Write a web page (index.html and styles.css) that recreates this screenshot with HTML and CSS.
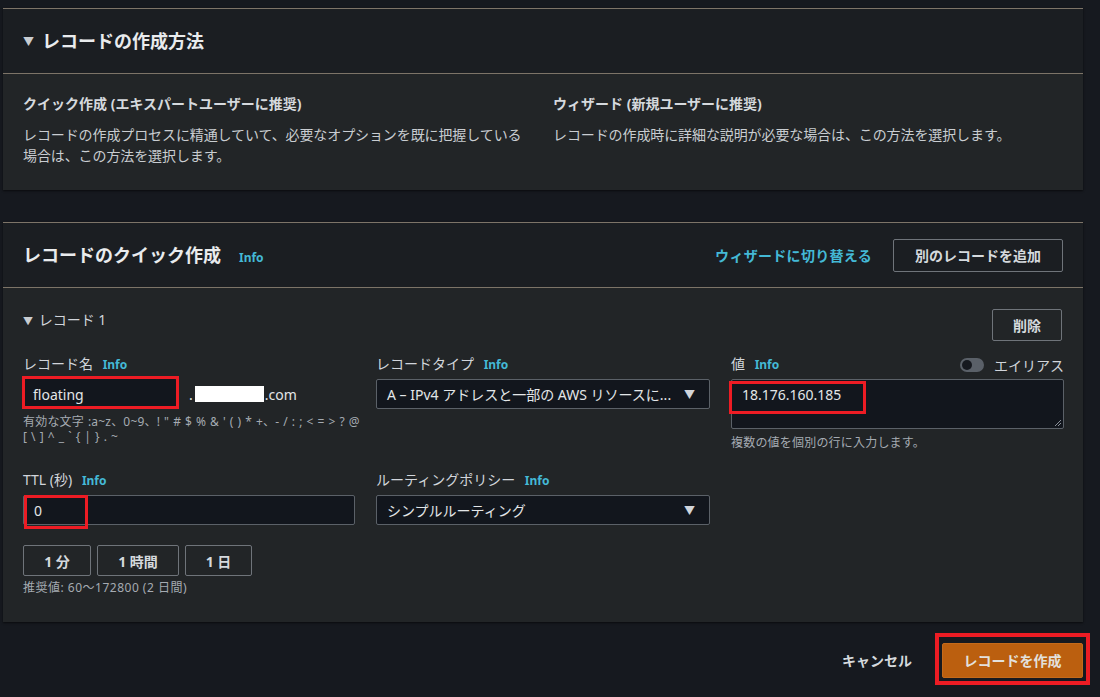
FILE: index.html
```html
<!DOCTYPE html>
<html lang="ja">
<head>
  <meta charset="UTF-8" />
  <title>レコードを作成</title>
  <link rel="stylesheet" href="styles.css">
</head>
<body>
  <div class="page">
    <section class="card">
      <div class="card-head">
        <span class="tri">&#9660;</span>
        <h2>レコードの作成方法</h2>
      </div>
      <div class="card-body methods">
        <div>
          <h3>クイック作成 (エキスパートユーザーに推奨)</h3>
          <p>レコードの作成プロセスに精通していて、必要なオプションを既に把握している場合は、この方法を選択します。</p>
        </div>
        <div>
          <h3>ウィザード (新規ユーザーに推奨)</h3>
          <p>レコードの作成時に詳細な説明が必要な場合は、この方法を選択します。</p>
        </div>
      </div>
    </section>

    <section class="card card-quick">
      <div class="card-head">
        <h2>レコードのクイック作成</h2>
        <a class="info info-head">Info</a>
        <div class="head-actions">
          <a class="link">ウィザードに切り替える</a>
          <button class="btn">別のレコードを追加</button>
        </div>
      </div>
      <div class="card-body">
        <div class="record-row">
          <span class="record-title"><span class="tri small">&#9660;</span> レコード 1</span>
          <button class="btn btn-del">削除</button>
        </div>

        <div class="grid">
          <div class="field">
            <label>レコード名 <a class="info">Info</a></label>
            <div class="name-row">
              <div class="input name-input">floating<span class="mark mark-name"></span></div>
              <span class="suffix">.<span class="blank"></span>.com</span>
            </div>
            <p class="hint hint-chars">有効な文字 :a~z、0~9、! " # $ % &amp; ' ( ) * +、- / : ; &lt; = &gt; ? @<br>[ \ ] ^ _ ` { | } . ~</p>
          </div>
          <div class="field">
            <label>レコードタイプ <a class="info">Info</a></label>
            <div class="input select">A – IPv4 アドレスと一部の AWS リソースに...<span class="caret">&#9660;</span></div>
          </div>
          <div class="field">
            <div class="label-row">
              <label>値 <a class="info">Info</a></label>
              <span class="alias"><span class="toggle"><span class="knob"></span></span>エイリアス</span>
            </div>
            <div class="input textarea">18.176.160.185
              <svg class="grip" width="9" height="9" viewBox="0 0 9 9"><path d="M8 2L2 8M8 5L5 8" stroke="#8a9099" stroke-width="1"/></svg>
              <span class="mark mark-value"></span>
            </div>
            <p class="hint">複数の値を個別の行に入力します。</p>
          </div>

          <div class="field row2">
            <label>TTL (秒) <a class="info">Info</a></label>
            <div class="input ttl">0<span class="mark mark-ttl"></span></div>
            <div class="ttl-btns">
              <button class="btn btn-sm w1">1 分</button>
              <button class="btn btn-sm w2">1 時間</button>
              <button class="btn btn-sm w3">1 日</button>
            </div>
            <p class="hint hint-ttl">推奨値: 60〜172800 (2 日間)</p>
          </div>
          <div class="field row2">
            <label>ルーティングポリシー <a class="info">Info</a></label>
            <div class="input select">シンプルルーティング<span class="caret">&#9660;</span></div>
          </div>
          <div></div>
        </div>
      </div>
    </section>

    <div class="footer">
      <a class="cancel">キャンセル</a>
      <div class="submit-wrap">
        <button class="btn-primary">レコードを作成</button>
        <span class="mark mark-submit"></span>
      </div>
    </div>
  </div>
</body>
</html>
```

FILE: styles.css
```css
html, body {
  margin: 0;
  background: #16191f;
}
body {
  font-family: "Noto Sans", "Noto Sans CJK JP", sans-serif;
  color: #d1d5db;
  font-size: 14px;
}
.page {
  width: 1080px;
  padding: 8px 0 0 3px;
}
.card {
  border-top: 1px solid #7d7468;
  background: #222527;
  box-shadow: 0 1px 2px rgba(0, 0, 0, 0.6);
}
.card + .card {
  margin-top: 32px;
}
.card-head {
  height: 64px;
  background: #1b1e22;
  border-bottom: 1px solid #7d7468;
  display: flex;
  align-items: center;
  padding: 0 20px;
}
.card-head h2 {
  margin: 0;
  font-size: 18px;
  font-weight: 700;
  color: #e9ebed;
  line-height: 24px;
}
.tri {
  color: #c9cdd1;
  font-size: 11px;
  margin-right: 8px;
}
.tri.small {
  font-size: 10px;
  margin-right: 2px;
}
.card-body {
  padding: 20px 20px;
}
.methods {
  display: grid;
  grid-template-columns: 1fr 1fr;
  column-gap: 20px;
  height: 76px;
  padding-top: 20px;
}
.methods h3 {
  margin: 0 0 10px;
  font-size: 14px;
  font-weight: 700;
  line-height: 20px;
  color: #d5d9dd;
}
.methods p {
  margin: 0;
  line-height: 21px;
  color: #c9cdd1;
  letter-spacing: -0.1px;
}
.info {
  color: #44b9d6;
  font-size: 12px;
  font-weight: 700;
  margin-left: 6px;
}
.info-head {
  margin-left: 18px;
  margin-top: 4px;
}
.head-actions {
  margin-left: auto;
  display: flex;
  align-items: center;
  gap: 21px;
}
.link {
  color: #44b9d6;
  font-weight: 700;
  font-size: 14px;
  letter-spacing: 0.3px;
}
.btn {
  background: #1b1e22;
  border: 1px solid #6f747a;
  border-radius: 2px;
  color: #d5d9dd;
  font-family: inherit;
  font-weight: 700;
  font-size: 14px;
  height: 33px;
  padding: 0 21px;
}
.card-quick .card-body {
  height: 294px;
}
.record-row {
  display: flex;
  justify-content: space-between;
  align-items: flex-start;
  height: 32px;
}
.record-title {
  font-size: 14px;
  line-height: 20px;
  margin-top: 2px;
  color: #d1d5db;
}
.btn-del {
  height: 32px;
  padding: 0 20px;
  margin-right: 1px;
  margin-top: 1px;
  background: #222527;
}
.grid {
  display: grid;
  grid-template-columns: 332px 334px 333px;
  column-gap: 21px;
  margin-top: 14px;
}
.field {
  position: relative;
}
.field label {
  display: block;
  font-size: 14px;
  line-height: 20px;
  color: #d1d5db;
  height: 21px;
}
.label-row {
  display: flex;
  justify-content: space-between;
  align-items: center;
}
.alias {
  display: flex;
  align-items: center;
  font-size: 14px;
  gap: 10px;
}
.toggle {
  width: 24px;
  height: 14px;
  border-radius: 7px;
  background: #5a6068;
  position: relative;
}
.knob {
  position: absolute;
  left: 2px;
  top: 2px;
  width: 10px;
  height: 10px;
  border-radius: 50%;
  background: #16191f;
}
.input {
  position: relative;
  box-sizing: border-box;
  margin-top: 4px;
  height: 30px;
  background: #12161d;
  border: 1px solid #5b6168;
  border-radius: 2px;
  padding: 0 10px;
  display: flex;
  align-items: center;
  font-size: 14px;
  color: #e3e6e8;
}
.name-row {
  display: flex;
  align-items: center;
}
.name-input {
  width: 153px;
  border: none;
}
.suffix {
  margin-left: 13px;
  margin-top: 4px;
  color: #e3e6e8;
  display: flex;
  align-items: center;
}
.blank {
  display: inline-block;
  width: 69px;
  height: 16px;
  background: #ffffff;
  margin: 0 1px 0 2px;
}
.hint {
  margin: 6px 0 0;
  font-size: 12px;
  line-height: 15px;
  color: #a5abb2;
  letter-spacing: 0.2px;
}
.hint-chars {
  white-space: nowrap;
  margin-top: 5px;
  letter-spacing: 0.2px;
  word-spacing: 0.6px;
}
.hint-ttl {
  margin-top: 4px;
  letter-spacing: 0.5px;
}
.select {
  padding-right: 14px;
}
.caret {
  margin-left: auto;
  font-size: 11px;
  color: #d1d5db;
}
.textarea {
  height: 50px;
  align-items: flex-start;
  padding-top: 5px;
}
.grip {
  position: absolute;
  right: 1px;
  bottom: 1px;
}
.row2 label {
  margin-top: 20px;
}
.ttl-btns {
  display: flex;
  gap: 6px;
  margin-top: 20px;
}
.btn-sm {
  height: 31px;
  padding: 0;
  background: #222527;
}
.w1 { width: 68px; }
.w2 { width: 82px; }
.w3 { width: 67px; }
.mark {
  position: absolute;
  border: 3px solid #ed1c24;
  pointer-events: none;
}
.mark-name {
  left: -1px;
  top: -3px;
  width: 151px;
  height: 27px;
}
.mark-value {
  left: -3px;
  top: 1px;
  width: 131px;
  height: 27px;
}
.mark-ttl {
  left: 0;
  top: -1px;
  width: 58px;
  height: 28px;
}
.footer {
  display: flex;
  justify-content: flex-end;
  align-items: center;
  height: 76px;
}
.cancel {
  font-weight: 700;
  color: #d5d9dd;
  margin-right: 30px;
  font-size: 14px;
}
.submit-wrap {
  position: relative;
}
.btn-primary {
  width: 141px;
  height: 35px;
  background: #bb5f0f;
  border: 1px solid #c46a1a;
  border-radius: 2px;
  color: #e3e0dc;
  font-family: inherit;
  font-weight: 700;
  font-size: 14px;
  display: block;
}
.mark-submit {
  border-width: 4px;
  left: -7px;
  top: -10px;
  right: -7px;
  bottom: -7px;
}
```
